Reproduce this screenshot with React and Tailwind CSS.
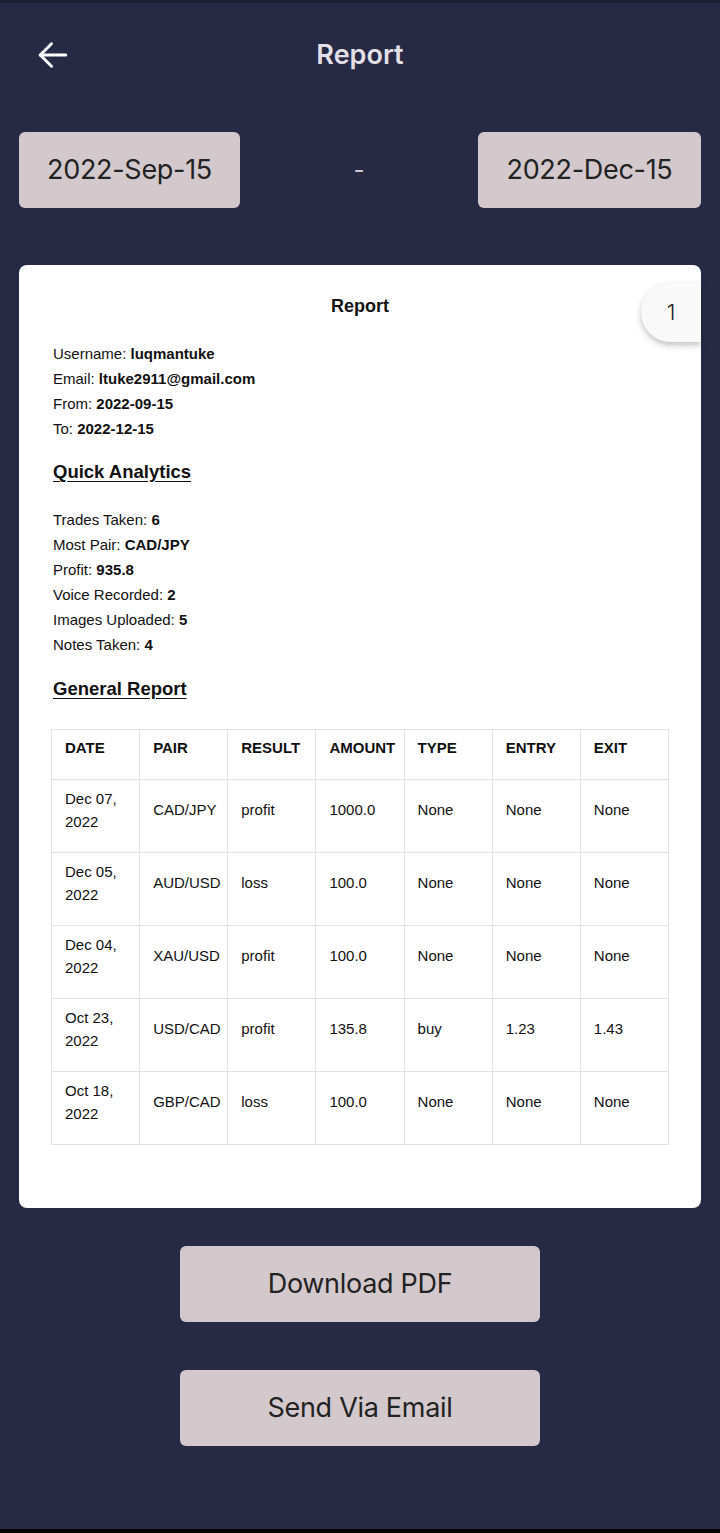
import React from "react";

const rows = [
    { date: ["Dec 07,", "2022"], pair: "CAD/JPY", result: "profit", amount: "1000.0", type: "None", entry: "None", exit: "None" },
    { date: ["Dec 05,", "2022"], pair: "AUD/USD", result: "loss", amount: "100.0", type: "None", entry: "None", exit: "None" },
    { date: ["Dec 04,", "2022"], pair: "XAU/USD", result: "profit", amount: "100.0", type: "None", entry: "None", exit: "None" },
    { date: ["Oct 23,", "2022"], pair: "USD/CAD", result: "profit", amount: "135.8", type: "buy", entry: "1.23", exit: "1.43" },
    { date: ["Oct 18,", "2022"], pair: "GBP/CAD", result: "loss", amount: "100.0", type: "None", entry: "None", exit: "None" },
];

const heads = ["DATE", "PAIR", "RESULT", "AMOUNT", "TYPE", "ENTRY", "EXIT"];

const cell = "border border-[#e3e3e3] pl-[13px] pt-[7px] pb-[19px] align-middle";

const Line = ({ label, value }) => (
    <div className="h-[25px] leading-[25px]">
        {label} <span className="font-bold">{value}</span>
    </div>
);

const App = () => (
    <div className="w-[720px] min-h-[1533px] bg-[#262a44] flex flex-col font-['Inter',sans-serif]">
        <div className="h-[3px] bg-[#1d2033]" />
        <div className="relative h-[100px] flex items-center justify-center pt-[4px]">
            <svg className="absolute left-[35px] top-[34px]" width="36" height="36" viewBox="0 0 24 24" fill="none" stroke="#fff" strokeWidth="2" strokeLinecap="round" strokeLinejoin="round">
                <path d="M20.5 12H3.5" />
                <path d="M11 4.5L3.5 12l7.5 7.5" />
            </svg>
            <span className="text-[27px] font-semibold text-[#e2dfe6]">Report</span>
        </div>
        <div className="flex items-center justify-between px-[19px] mt-[29px]">
            <div className="w-[221px] h-[76px] rounded-[6px] bg-[#d3c9cd] flex items-center justify-center text-[27px] text-[#222] tracking-[-0.3px]">2022-Sep-15</div>
            <span className="text-[24px] text-[#d3c9cd]">-</span>
            <div className="w-[223px] h-[76px] rounded-[6px] bg-[#d3c9cd] flex items-center justify-center text-[27px] text-[#222] tracking-[-0.3px]">2022-Dec-15</div>
        </div>
        <div className="relative mx-[19px] mt-[57px] h-[943px] bg-white rounded-[8px] font-['Liberation_Sans',Arial,sans-serif] text-[#111] text-[15px]">
            <div className="absolute right-0 top-[18px] w-[60px] h-[59px] rounded-l-full bg-[#f9f9f9] shadow-[0_3px_6px_rgba(0,0,0,0.25)] flex items-center justify-center font-['Inter',sans-serif] text-[22px] font-light text-[#222]">1</div>
            <div className="text-center font-bold text-[18px] pt-[30px] leading-[22px]">Report</div>
            <div className="pl-[34px] pt-[24px]">
                <Line label="Username:" value="luqmantuke" />
                <Line label="Email:" value="ltuke2911@gmail.com" />
                <Line label="From:" value="2022-09-15" />
                <Line label="To:" value="2022-12-15" />
                <div className="mt-[20px] text-[18.5px] font-bold underline underline-offset-[3px] leading-[22px]">Quick Analytics</div>
                <div className="mt-[24px]">
                    <Line label="Trades Taken:" value="6" />
                    <Line label="Most Pair:" value="CAD/JPY" />
                    <Line label="Profit:" value="935.8" />
                    <Line label="Voice Recorded:" value="2" />
                    <Line label="Images Uploaded:" value="5" />
                    <Line label="Notes Taken:" value="4" />
                </div>
                <div className="mt-[21px] text-[18.5px] font-bold underline underline-offset-[3px] leading-[22px]">General Report</div>
            </div>
            <table className="ml-[32px] mt-[29px] w-[618px] border-collapse table-fixed">
                <thead>
                    <tr className="h-[50px]">
                        {heads.map((h) => (
                            <th key={h} className={`${cell} text-left font-bold`}>{h}</th>
                        ))}
                    </tr>
                </thead>
                <tbody>
                    {rows.map((r, i) => (
                        <tr key={i} className="h-[72.6px]">
                            <td className={`${cell} leading-[23px]`}>{r.date[0]}<br />{r.date[1]}</td>
                            <td className={cell}>{r.pair}</td>
                            <td className={cell}>{r.result}</td>
                            <td className={cell}>{r.amount}</td>
                            <td className={cell}>{r.type}</td>
                            <td className={cell}>{r.entry}</td>
                            <td className={cell}>{r.exit}</td>
                        </tr>
                    ))}
                </tbody>
            </table>
        </div>
        <div className="flex flex-col items-center gap-[48px] mt-[38px]">
            <div className="w-[360px] h-[76px] rounded-[6px] bg-[#d3c9cd] flex items-center justify-center text-[27px] text-[#222] tracking-[-0.3px]">Download PDF</div>
            <div className="w-[360px] h-[76px] rounded-[6px] bg-[#d3c9cd] flex items-center justify-center text-[27px] text-[#222] tracking-[-0.3px]">Send Via Email</div>
        </div>
        <div className="flex-1" />
        <div className="h-[4px] bg-black" />
    </div>
);

export default App;
